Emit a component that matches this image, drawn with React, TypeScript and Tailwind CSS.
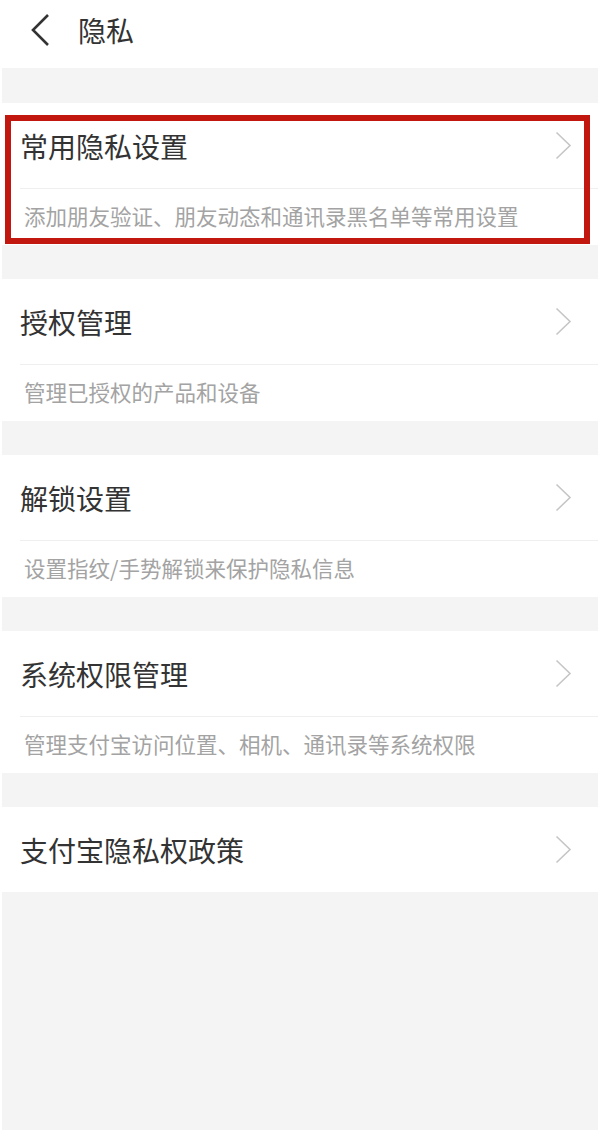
import React from "react"

const font = { fontFamily: '"Noto Sans CJK SC", "Noto Sans", sans-serif' }

const sections = [
  { title: "常用隐私设置", desc: "添加朋友验证、朋友动态和通讯录黑名单等常用设置", highlight: true },
  { title: "授权管理", desc: "管理已授权的产品和设备" },
  { title: "解锁设置", desc: "设置指纹/手势解锁来保护隐私信息" },
  { title: "系统权限管理", desc: "管理支付宝访问位置、相机、通讯录等系统权限" },
  { title: "支付宝隐私权政策" },
]

function Chevron() {
  return (
    <svg width="17" height="29" viewBox="0 0 17 29" fill="none">
      <path d="M1.5 1.5 L15 14.5 L1.5 27.5" stroke="#c6c6c6" strokeWidth="1.6" />
    </svg>
  )
}

function Section({ title, desc, highlight }: { title: string; desc?: string; highlight?: boolean }) {
  return (
    <div className="relative bg-white">
      <div className="flex h-[85px] items-center justify-between pl-[18px] pr-[26px]">
        <span className="text-[28px] leading-none text-[#333333]">{title}</span>
        <Chevron />
      </div>
      {desc && (
        <div className="ml-[18px] flex h-[57px] items-center border-t border-[#efefef] pl-[4px] pb-[2px]">
          <span className="text-[21.5px] leading-none text-[#a3a3a3]">{desc}</span>
        </div>
      )}
      {highlight && (
        <div className="pointer-events-none absolute left-[3px] top-[12px] h-[129px] w-[585px] border-[6px] border-[#c2170f]" />
      )}
    </div>
  )
}

export default function App() {
  return (
    <div className="flex h-[1130px] w-[600px] flex-col bg-white" style={font}>
      <div className="flex h-[68px] shrink-0 items-center pb-[8px]">
        <svg className="ml-[29px]" width="22" height="34" viewBox="0 0 22 34" fill="none">
          <path d="M19 2 L4 17 L19 32" stroke="#333333" strokeWidth="2.6" />
        </svg>
        <span className="ml-[27px] text-[28px] leading-none text-[#333333]">隐私</span>
      </div>
      <div className="mx-[2px] flex flex-1 flex-col gap-[34px] bg-[#f4f4f4] pt-[35px]">
        {sections.map((s) => (
          <Section key={s.title} {...s} />
        ))}
      </div>
    </div>
  )
}
